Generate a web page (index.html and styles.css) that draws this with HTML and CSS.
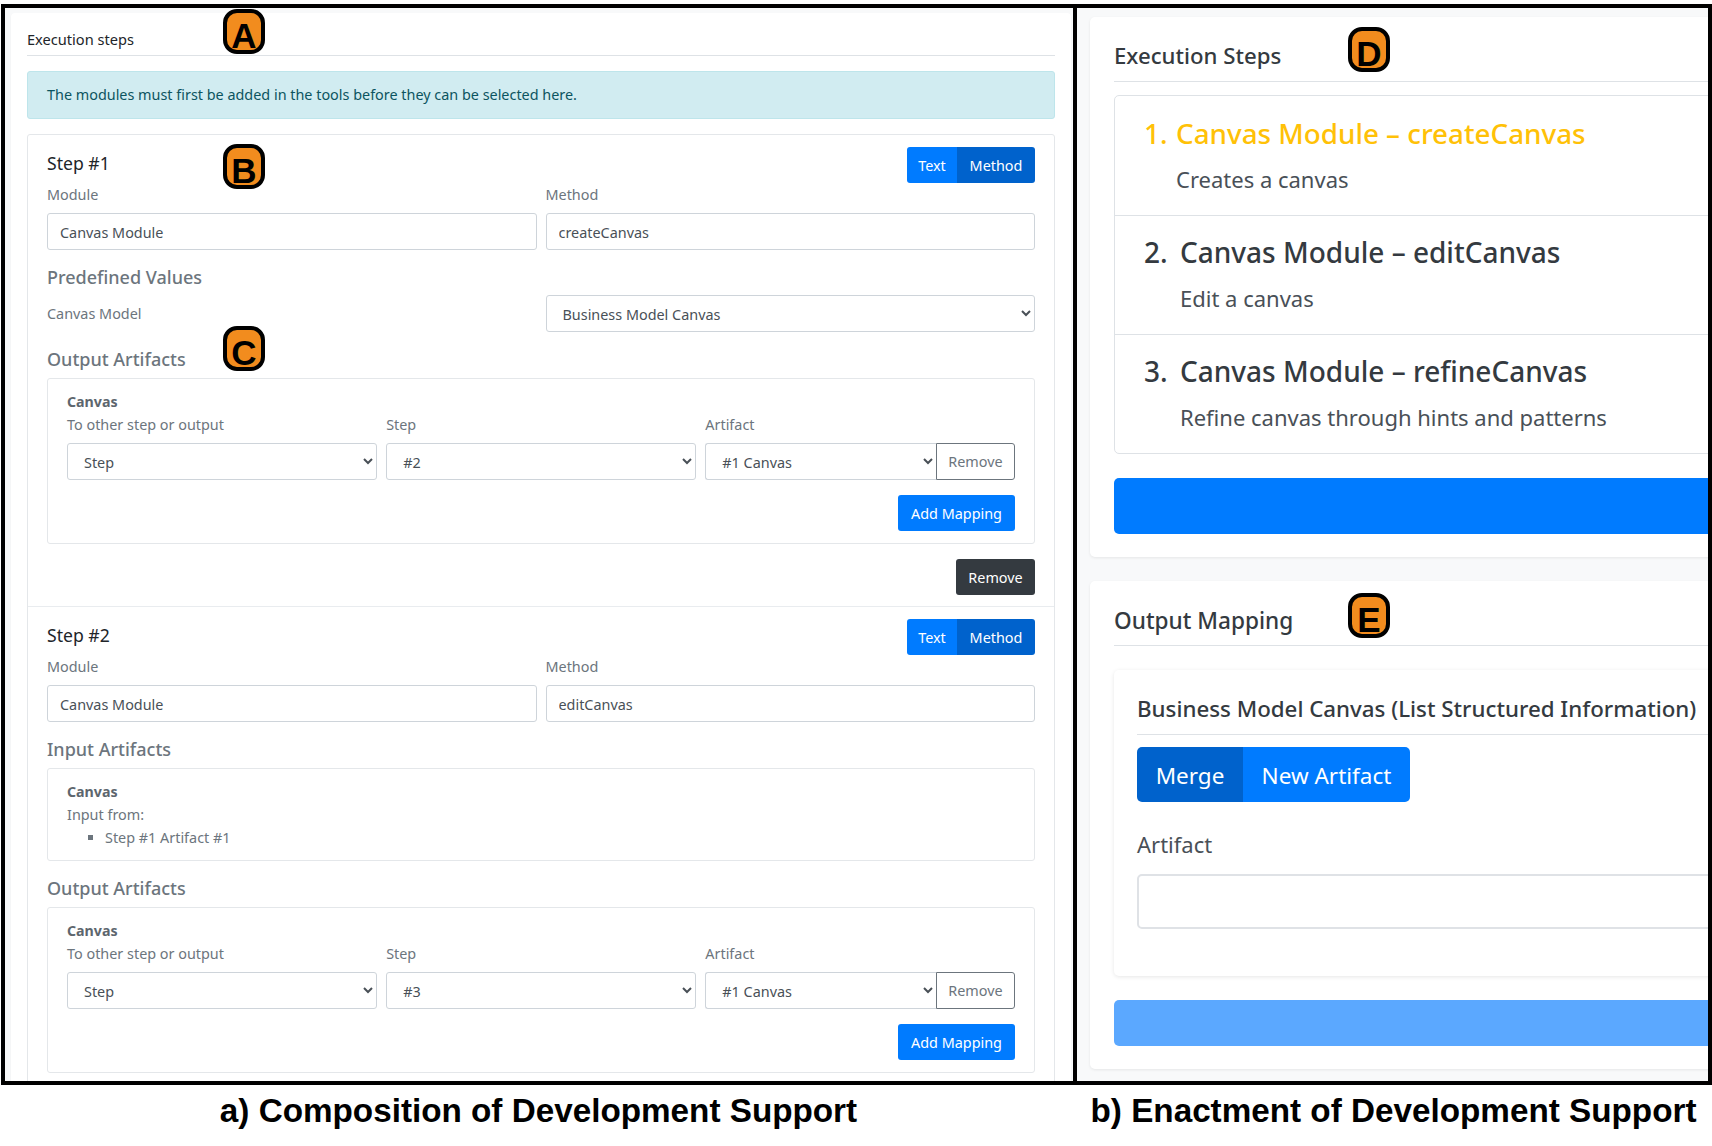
FILE: index.html
```html
<!DOCTYPE html>
<html lang="en">
<head>
  <meta charset="UTF-8">
  <title>Composition and Enactment of Development Support</title>
  <link rel="stylesheet" href="styles.css">
</head>
<body>
  <div class="figure">
    <!-- a) composition -->
    <div class="pane pane-left">
      <div class="card">
        <div class="card-title">Execution steps</div>
        <div class="alert">The modules must first be added in the tools before they can be selected here.</div>
        <div class="step-list">
          <div class="step">
            <div class="step-head">
              <span class="step-name">Step #1</span>
              <div class="btn-group">
                <button class="btn btn-blue">Text</button>
                <button class="btn btn-active">Method</button>
              </div>
            </div>
            <div class="two-cols">
              <div>
                <label class="field-label">Module</label>
                <input class="control" type="text" value="Canvas Module">
              </div>
              <div>
                <label class="field-label">Method</label>
                <input class="control" type="text" value="createCanvas">
              </div>
            </div>
            <h5 class="sub-head">Predefined Values</h5>
            <div class="two-cols center-row">
              <label class="plain-label">Canvas Model</label>
              <select class="control select"><option>Business Model Canvas</option></select>
            </div>
            <h5 class="sub-head">Output Artifacts</h5>
            <div class="artifact-box">
              <div class="artifact-name">Canvas</div>
              <div class="three-cols">
                <div>
                  <label class="field-label">To other step or output</label>
                  <select class="control select"><option>Step</option></select>
                </div>
                <div>
                  <label class="field-label">Step</label>
                  <select class="control select"><option>#2</option></select>
                </div>
                <div>
                  <label class="field-label">Artifact</label>
                  <div class="input-group">
                    <select class="control select"><option>#1 Canvas</option></select>
                    <button class="btn btn-outline">Remove</button>
                  </div>
                </div>
              </div>
              <div class="right-row"><button class="btn btn-blue btn-solo">Add Mapping</button></div>
            </div>
            <div class="right-row"><button class="btn btn-dark">Remove</button></div>
          </div>
          <div class="step">
            <div class="step-head">
              <span class="step-name">Step #2</span>
              <div class="btn-group">
                <button class="btn btn-blue">Text</button>
                <button class="btn btn-active">Method</button>
              </div>
            </div>
            <div class="two-cols">
              <div>
                <label class="field-label">Module</label>
                <input class="control" type="text" value="Canvas Module">
              </div>
              <div>
                <label class="field-label">Method</label>
                <input class="control" type="text" value="editCanvas">
              </div>
            </div>
            <h5 class="sub-head">Input Artifacts</h5>
            <div class="artifact-box input-box">
              <div class="artifact-name">Canvas</div>
              <div class="input-from">Input from:</div>
              <ul class="from-list"><li>Step #1 Artifact #1</li></ul>
            </div>
            <h5 class="sub-head">Output Artifacts</h5>
            <div class="artifact-box">
              <div class="artifact-name">Canvas</div>
              <div class="three-cols">
                <div>
                  <label class="field-label">To other step or output</label>
                  <select class="control select"><option>Step</option></select>
                </div>
                <div>
                  <label class="field-label">Step</label>
                  <select class="control select"><option>#3</option></select>
                </div>
                <div>
                  <label class="field-label">Artifact</label>
                  <div class="input-group">
                    <select class="control select"><option>#1 Canvas</option></select>
                    <button class="btn btn-outline">Remove</button>
                  </div>
                </div>
              </div>
              <div class="right-row"><button class="btn btn-blue btn-solo">Add Mapping</button></div>
            </div>
          </div>
        </div>
      </div>
    </div>

    <!-- b) enactment -->
    <div class="pane pane-right">
      <div class="big-card">
        <div class="big-title">Execution Steps</div>
        <div class="run-list">
          <div class="run-item run-current">
            <div class="run-title"><span class="run-no">1.</span>Canvas Module – createCanvas</div>
            <div class="run-text">Creates a canvas</div>
          </div>
          <div class="run-item">
            <div class="run-title"><span class="run-no">2.</span>Canvas Module – editCanvas</div>
            <div class="run-text">Edit a canvas</div>
          </div>
          <div class="run-item">
            <div class="run-title"><span class="run-no">3.</span>Canvas Module – refineCanvas</div>
            <div class="run-text">Refine canvas through hints and patterns</div>
          </div>
        </div>
        <div class="wide-btn"></div>
      </div>
      <div class="big-card second">
        <div class="big-title mapping">Output Mapping</div>
        <div class="inner-card">
          <div class="inner-title">Business Model Canvas (List Structured Information)</div>
          <div class="big-group">
            <button class="big-btn btn-active">Merge</button>
            <button class="big-btn btn-blue">New Artifact</button>
          </div>
          <label class="big-label">Artifact</label>
          <input class="big-input" type="text">
        </div>
        <div class="wide-btn disabled"></div>
      </div>
    </div>
  </div>

  <div class="captions">
    <div class="caption caption-left">a) Composition of Development Support</div>
    <div class="caption caption-right">b) Enactment of Development Support</div>
  </div>

  <!-- letter tags laid over the screenshots -->
  <div class="tag tag-a">A</div>
  <div class="tag tag-b">B</div>
  <div class="tag tag-c">C</div>
  <div class="tag tag-d">D</div>
  <div class="tag tag-e">E</div>
</body>
</html>
```

FILE: styles.css
```css
* {
  box-sizing: border-box;
}
body {
  margin: 0;
  width: 1712px;
  height: 1146px;
  position: relative;
  background: #fff;
  overflow: hidden;
  font-family: "Noto Sans", "Open Sans", sans-serif;
  color: #212529;
}
.figure {
  display: flex;
  margin: 4px 0 0 1px;
  height: 1081px;
  border: 4px solid #000;
}
.pane {
  background: #f8f9fa;
  overflow: hidden;
}
.pane-left {
  flex: none;
  width: 1072px;
  padding: 5px 2px 0 6px;
  border-right: 4px solid #000;
}
.pane-right {
  flex: 1;
  padding: 9px 0 0 13px;
}

/* left side */
.card {
  background: #fff;
  border-radius: 4px;
  padding: 15px 16px 40px;
  box-shadow: 0 1px 2px rgba(0, 0, 0, 0.05);
}
.card-title {
  font-size: 14.6px;
  line-height: 22px;
  padding-bottom: 5px;
  border-bottom: 1px solid #dee2e6;
  margin-bottom: 15px;
}
.alert {
  height: 48px;
  padding: 0 19px;
  line-height: 46px;
  font-size: 14.4px;
  color: #0c5460;
  background: #d1ecf1;
  border: 1px solid #bee5eb;
  border-radius: 3px;
  margin-bottom: 15px;
}
.step-list {
  border: 1px solid #e4e7ea;
  border-radius: 3px;
}
.step {
  padding: 12px 19px 11px;
  border-bottom: 1px solid #e9ecef;
}
.step-head {
  display: flex;
  justify-content: space-between;
  align-items: center;
  height: 36px;
  margin-bottom: 1px;
}
.step-name {
  font-size: 17.6px;
  margin-top: -4px;
}
.two-cols {
  display: grid;
  grid-template-columns: 1fr 1fr;
  gap: 9px;
}
.center-row {
  align-items: center;
}
.field-label {
  display: block;
  height: 22px;
  line-height: 22px;
  margin-bottom: 7px;
  font-size: 14.4px;
  color: #6c757d;
}
.plain-label {
  font-size: 14.4px;
  color: #6c757d;
}
.control {
  display: block;
  width: 100%;
  height: 37px;
  padding: 1px 12px 0;
  font: inherit;
  font-size: 14.4px;
  color: #495057;
  background: #fff;
  border: 1px solid #ced4da;
  border-radius: 3px;
}
.select {
  padding-left: 12px;
}
.sub-head {
  margin: 16px 0 7px;
  font-size: 18px;
  line-height: 22px;
  font-weight: 500;
  color: #6c757d;
}
.sub-head + .artifact-box {
  margin-top: 8px;
}
.artifact-box {
  border: 1px solid #e4e7ea;
  border-radius: 3px;
  padding: 12px 19px;
}
.artifact-name {
  height: 22px;
  line-height: 22px;
  margin-bottom: 1px;
  font-size: 14.2px;
  font-weight: 700;
  color: #5d666e;
}
.three-cols {
  display: grid;
  grid-template-columns: repeat(3, 1fr);
  gap: 9.5px;
}
.input-group {
  display: flex;
}
.input-group .select {
  flex: 1;
  min-width: 0;
  border-radius: 3px 0 0 3px;
  border-right: none;
}
.right-row {
  display: flex;
  justify-content: flex-end;
  margin-top: 15px;
}
.input-box {
  padding-bottom: 11px;
}
.input-from {
  height: 22px;
  line-height: 22px;
  margin-bottom: 1px;
  font-size: 14.4px;
  color: #6c757d;
}
.from-list {
  list-style: square;
  margin: 0;
  padding: 0 0 0 38px;
  font-size: 14.4px;
  line-height: 22px;
  color: #6c757d;
}

/* buttons */
.btn {
  height: 36px;
  padding: 0 12px;
  font: inherit;
  font-size: 14.4px;
  border: none;
  border-radius: 3px;
  color: #fff;
  cursor: pointer;
}
.btn-blue {
  background: #007bff;
  color: #fff;
}
.btn-active {
  background: #0062cc;
  color: #fff;
}
.btn-dark {
  width: 79px;
  padding: 0;
  background: #343a40;
}
.btn-solo {
  width: 117px;
  padding: 0;
}
.btn-outline {
  flex: none;
  width: 79px;
  height: 37px;
  padding: 0;
  background: #fff;
  color: #6c757d;
  border: 1px solid #6c757d;
  border-radius: 0 3px 3px 0;
}
.btn-group {
  display: flex;
}
.btn-group .btn {
  width: 50px;
  padding: 0;
  border-radius: 3px 0 0 3px;
}
.btn-group .btn-active {
  width: 78px;
  border-radius: 0 3px 3px 0;
}

/* right side */
.big-card {
  width: 720px;
  padding: 24px 24px 23px;
  background: #fff;
  border-radius: 5px;
  box-shadow: 0 1px 3px rgba(0, 0, 0, 0.08);
}
.big-card.second {
  margin-top: 24px;
}
.big-title {
  font-size: 22.2px;
  line-height: 30px;
  font-weight: 500;
  color: #343a40;
  padding-bottom: 10px;
  border-bottom: 1px solid #dee2e6;
}
.big-title.mapping {
  font-size: 22.6px;
  padding-top: 1px;
  padding-bottom: 9px;
}
.run-list {
  margin-top: 13px;
  border: 1px solid #dee2e6;
  border-radius: 5px;
}
.run-item {
  padding: 18px 29px 21px;
  border-bottom: 1px solid #dee2e6;
}
.run-item:first-child {
  padding-top: 19px;
}
.run-item:last-child {
  border-bottom: none;
}
.run-title {
  font-size: 28px;
  line-height: 36px;
  font-weight: 500;
  color: #343a40;
  white-space: nowrap;
}
.run-no {
  display: inline-block;
  width: 36px;
}
.run-text {
  margin: 13px 0 0 36px;
  font-size: 22px;
  line-height: 30px;
  color: #495057;
}
.run-current .run-title {
  font-size: 27.8px;
  color: #ffc107;
}
.run-current .run-no {
  width: 32px;
}
.run-current .run-text {
  margin-left: 32px;
}
.wide-btn {
  height: 56px;
  margin-top: 24px;
  background: #007bff;
  border-radius: 5px;
}
.wide-btn.disabled {
  height: 46px;
  background: #5ba8ff;
}
.inner-card {
  margin-top: 24px;
  padding: 24px 23px 47px;
  border-radius: 5px;
  box-shadow: 0 1px 4px rgba(0, 0, 0, 0.1);
}
.inner-title {
  font-size: 22.3px;
  line-height: 30px;
  font-weight: 500;
  color: #343a40;
  padding-bottom: 10px;
  border-bottom: 1px solid #dee2e6;
  white-space: nowrap;
}
.big-group {
  display: flex;
  margin-top: 12px;
}
.big-btn {
  height: 55px;
  padding: 1px 0 0;
  font: inherit;
  font-size: 22.5px;
  border: none;
  cursor: pointer;
  width: 106px;
  border-radius: 5px 0 0 5px;
}
.big-btn.btn-blue {
  width: 167px;
  border-radius: 0 5px 5px 0;
}
.big-label {
  display: block;
  margin: 27px 0 15px;
  font-size: 22px;
  line-height: 30px;
  color: #495057;
}
.big-input {
  display: block;
  width: 100%;
  height: 55px;
  background: #fff;
  border: 2px solid #dfe2e6;
  border-radius: 5px;
}

/* captions */
.captions {
  display: flex;
  padding-top: 3px;
}
.caption {
  font-family: "Liberation Sans", Arial, sans-serif;
  font-weight: 700;
  font-size: 33.25px;
  line-height: 46px;
  color: #000;
  text-align: center;
}
.caption-left {
  width: 1077px;
}
.caption-right {
  flex: 1;
  padding-right: 2px;
}

/* letter tags */
.tag {
  position: absolute;
  width: 42px;
  height: 45px;
  background: #f28c1e;
  border: 4px solid #000;
  border-radius: 14px;
  font-family: "Liberation Sans", Arial, sans-serif;
  font-weight: 700;
  font-size: 35px;
  line-height: 46px;
  text-align: center;
  color: #000;
}
.tag-a { left: 223px; top: 9px; }
.tag-b { left: 223px; top: 144px; }
.tag-c { left: 223px; top: 326px; }
.tag-d { left: 1348px; top: 27px; }
.tag-e { left: 1348px; top: 593px; }
```
